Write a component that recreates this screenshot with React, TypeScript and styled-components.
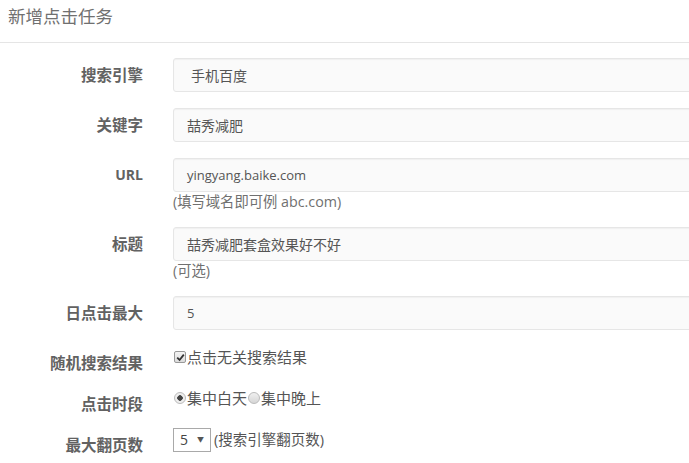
import styled, { createGlobalStyle } from 'styled-components';

const GlobalStyle = createGlobalStyle`
    body {
        margin: 0;
        background: #fff;
        font-family: "Open Sans", "Noto Sans CJK SC", sans-serif;
        color: #555;
        overflow: hidden;
    }
`

const FONT = `"Open Sans", "Noto Sans CJK SC", sans-serif`

export default function App() {
    return (
        <>
            <GlobalStyle />
            <Page>
                <Header>
                    <Title>新增点击任务</Title>
                </Header>
                <Form>
                    <Group>
                        <Label>搜索引擎</Label>
                        <Field>
                            <Input indent={17}>手机百度</Input>
                        </Field>
                    </Group>
                    <Group>
                        <Label>关键字</Label>
                        <Field>
                            <Input>喆秀减肥</Input>
                        </Field>
                    </Group>
                    <Group>
                        <Label latin>URL</Label>
                        <Field>
                            <Input size={13}>yingyang.baike.com</Input>
                            <Help>(填写域名即可例 abc.com)</Help>
                        </Field>
                    </Group>
                    <Group>
                        <Label>标题</Label>
                        <Field>
                            <Input>喆秀减肥套盒效果好不好</Input>
                            <Help>(可选)</Help>
                        </Field>
                    </Group>
                    <Group>
                        <Label>日点击最大</Label>
                        <Field>
                            <Input size={13}>5</Input>
                        </Field>
                    </Group>
                    <Group compact>
                        <Label>随机搜索结果</Label>
                        <Inline>
                            <CheckBox>
                                <svg width="9" height="9" viewBox="0 0 9 9">
                                    <path d="M1.2 4.6 L3.6 7 L7.8 1.6" fill="none" stroke="#333" strokeWidth="1.8" />
                                </svg>
                            </CheckBox>
                            点击无关搜索结果
                        </Inline>
                    </Group>
                    <Group compact>
                        <Label>点击时段</Label>
                        <Inline>
                            <Radio checked />集中白天<Radio />集中晚上
                        </Inline>
                    </Group>
                    <Group compact>
                        <Label>最大翻页数</Label>
                        <Inline top={0}>
                            <Select>
                                <span>5</span>
                                <Arrow>▼</Arrow>
                            </Select>
                            <SelectNote>(搜索引擎翻页数)</SelectNote>
                        </Inline>
                    </Group>
                </Form>
            </Page>
        </>
    );
}

const Page = styled.div`
    width: 689px;
    height: 463px;
    overflow: hidden;
`

const Header = styled.div`
    height: 42px;
    padding: 0 8px;
    display: flex;
    align-items: center;
    border-bottom: 1px solid #e5e5e5;
`

const Title = styled.h3`
    margin: 0;
    font-size: 17.5px;
    font-weight: normal;
    color: #707070;
    font-family: ${FONT};
    line-height: 1;
    padding-bottom: 8px;
`

const Form = styled.div`
    padding-top: 15px;
`

const Group = styled.div<{ compact?: boolean }>`
    display: flex;
    align-items: flex-start;
    margin-bottom: ${p => (p.compact ? '11px' : '16px')};
    min-height: ${p => (p.compact ? '30px' : 'auto')};
`

const Label = styled.label<{ latin?: boolean }>`
    width: 143px;
    flex: none;
    margin-right: 30px;
    text-align: right;
    padding-top: 7px;
    line-height: 20px;
    font-size: ${p => (p.latin ? '14px' : '15.5px')};
    font-weight: bold;
    color: #626262;
    font-family: ${FONT};
`

const Field = styled.div`
    flex: 1;
    min-width: 0;
`

const Input = styled.div<{ indent?: number; size?: number }>`
    box-sizing: border-box;
    height: 34px;
    width: 560px;
    padding-left: ${p => p.indent ?? 13}px;
    display: flex;
    align-items: center;
    background: #fafafa;
    border: 1px solid #e6e6e6;
    border-radius: 3px;
    box-shadow: inset 0 1px 1px rgba(0, 0, 0, 0.04);
    font-size: ${p => p.size ?? 14}px;
    color: #555;
    font-family: ${FONT};
    white-space: nowrap;
`

const Help = styled.div`
    font-size: 14.3px;
    line-height: 19px;
    color: #707070;
    font-family: ${FONT};
`

const Inline = styled.div<{ top?: number }>`
    display: flex;
    align-items: center;
    padding-top: ${p => p.top ?? 1}px;
    line-height: 20px;
    font-size: 15px;
    color: #555;
    font-family: ${FONT};
`

const CheckBox = styled.span`
    box-sizing: border-box;
    width: 12px;
    height: 12px;
    margin: 0 1px 0 1px;
    border: 1px solid #999;
    border-radius: 2px;
    background: linear-gradient(#f4f4f4, #dcdcdc);
    display: flex;
    align-items: center;
    justify-content: center;
`

const Radio = styled.span<{ checked?: boolean }>`
    box-sizing: border-box;
    width: 12px;
    height: 12px;
    margin: 0 1px 0 1px;
    border-radius: 50%;
    border: 1px solid #bbb;
    background: ${p => (p.checked ? 'radial-gradient(circle, #444 0 2.5px, #eee 3px)' : 'linear-gradient(#f0f0f0, #d6d6d6)')};
`

const Select = styled.div`
    box-sizing: border-box;
    width: 38px;
    height: 24px;
    border: 1px solid #a9a9a9;
    background: #fff;
    display: flex;
    align-items: center;
    justify-content: space-between;
    padding: 0 6px 0 6px;
    font-size: 14px;
    color: #444;
    font-family: ${FONT};
`

const Arrow = styled.span`
    font-size: 7px;
    color: #555;
`

const SelectNote = styled.span`
    margin-left: 3px;
    font-size: 14.5px;
    color: #555;
`
